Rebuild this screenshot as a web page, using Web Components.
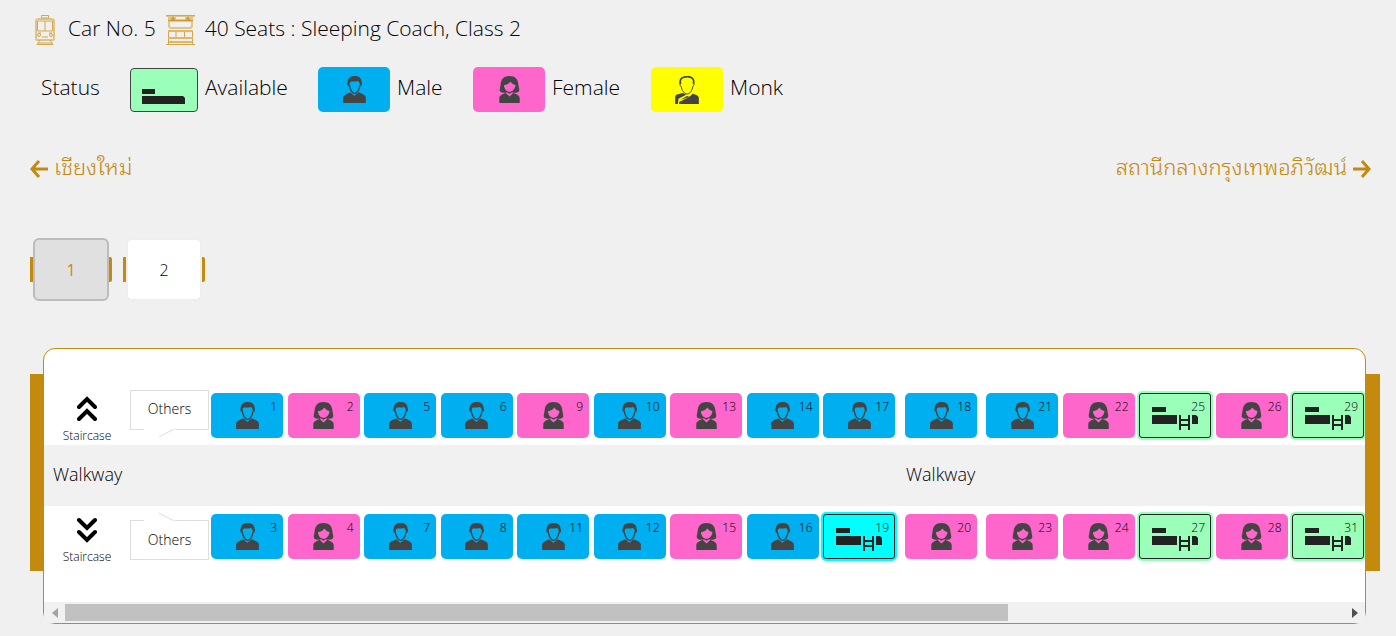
<!DOCTYPE html>
<html lang="en">
<head>
<meta charset="utf-8">
<title>Seat map</title>
<style>
  :root {
    --gold: #c48a0e;
    --ink: #000;
    --male: #00aff0;
    --female: #ff66cc;
    --monk: #ffff00;
    --free: #99ffb9;
    --picked: #00ffff;
  }
  body {
    margin: 0;
    background: #f0f0f0;
    color: var(--ink);
    font-family: "Open Sans", "Noto Sans Thai Looped", Laksaman, Loma, Garuda, "Noto Serif Thai", "Noto Sans Thai", sans-serif;
    font-weight: 350;
  }
</style>
</head>
<body>
<seat-page></seat-page>

<script>
const ICONS = {
  male: `<svg width="23" height="27" viewBox="0 0 69 82"><path fill="#444" d="M0 82V66C0 57 10 55 21 49L34 60L48 49C59 55 69 57 69 66V82Z"/><path fill="none" stroke="#444" stroke-width="4" d="M18 18C13 22 14 28 19 29C21 42 28 53 35 53S49 42 51 29C56 28 57 22 52 18"/><path fill="#444" d="M14 24C12 8 21 0 35 0S58 8 56 24L50 26C51 19 48 17 44 15C36 19 28 15 24 17C20 19 20 21 20 27Z"/></svg>`,
  female: `<svg width="21" height="27" viewBox="0 0 62 82"><path fill="#444" d="M0 82V68C0 59 8 57 19 51L31 62L43 51C54 57 62 59 62 68V82Z"/><path fill="#444" fill-rule="evenodd" d="M31 0C14 0 5 10 4 26C3 34 0 42 2 46C9 52 17 52 23 49L31 54L39 49C45 52 53 52 60 46C62 42 59 34 58 26C57 10 48 0 31 0ZM14 28C23 27 30 23 34 17C37 23 42 26 49 27C49 38 40 48 31 48S15 39 14 28Z"/></svg>`,
  monk: `<svg width="24" height="28" viewBox="0 0 71 84"><path fill="none" stroke="#444" stroke-width="3" d="M17 20C12 24 15 30 18 31C20 44 28 54 36 54S51 44 53 31C57 29 58 24 54 20"/><path fill="none" stroke="#444" stroke-width="5" d="M16 24C12 9 21 2 36 2S58 9 55 24"/><path fill="#444" d="M0 84V62C2 54 13 54 23 51L33 56L10 68L8 84ZM12 84V77C26 70 42 66 52 53C62 56 70 57 71 66V84ZM16 71L34 61L42 60L36 65Z"/></svg>`,
  bed: `<svg width="44" height="18" viewBox="0 0 44 18"><path fill="#222" d="M0 2H13V7H0ZM0 9H41L43 11V17H0Z"/></svg>`,
  bunk: `<svg width="46" height="24" viewBox="0 0 46 24"><path fill="#222" d="M0 0H14V5H0ZM0 8H25V17H0ZM40 8H44L46 10V17H40Z"/><path fill="none" stroke="#222" stroke-width="2" d="M28 8V23M37 8V23M28 13H37M28 18H37"/></svg>`,
  train: `<svg width="22" height="30" viewBox="0 0 22 30" fill="none" stroke="#d5a64a"><path stroke="#dfc48a" stroke-width="2" d="M2 24V6Q2 4 5 4H17Q20 4 20 6V24Q20 25 18 25H4Q2 25 2 24Z"/><path d="M7.500 .5H14.500V3H7.500Z"/><path d="M3.500 6H18.500V16H3.500ZM11 6V16M4 18H7M15 18H18M8 22H14"/><circle cx="5" cy="20" r="1.500"/><circle cx="17" cy="20" r="1.500"/><path d="M6 25L3 29.500H19L16 25M4 28H18"/></svg>`,
  coach: `<svg width="29" height="30" viewBox="0 0 29 30"><path fill="#e0c58b" d="M0 0H29V2H27V12L25 14H4L2 12V2H0Z"/><path fill="#f0f0f0" d="M10 2H19V4H10ZM4 7H25V11L24 12H5L4 11Z"/><path fill="#d39a2e" d="M4 6L7 1L10 6ZM19 6L22 1L25 6ZM2 5H27V6H2Z"/><g fill="none" stroke="#d5a64a"><path d="M0 .5H29M0 29.500H29M2.500 15V29M26.500 15V29M10 16V22M18.500 16V22"/><path stroke="#e0b766" stroke-width="2" d="M2 16H27M2 23H27M3 27H26"/></g></svg>`,
  left: `<svg width="18" height="18" viewBox="0 0 18 18" fill="none" stroke="#c48a0e" stroke-width="3"><path d="M9 1L2 9L9 17M2 9H18"/></svg>`,
  right: `<svg width="18" height="18" viewBox="0 0 18 18" fill="none" stroke="#c48a0e" stroke-width="3"><path d="M9 1L16 9L9 17M0 9H16"/></svg>`,
  up: `<svg width="20" height="26" viewBox="0 0 20 26" fill="none" stroke="#000" stroke-width="4" stroke-linecap="round"><path d="M2 11L10 3L18 11M2 23L10 15L18 23"/></svg>`,
  down: `<svg width="20" height="26" viewBox="0 0 20 26" fill="none" stroke="#000" stroke-width="4" stroke-linecap="round"><path d="M2 3L10 11L18 3M2 15L10 23L18 15"/></svg>`
};

class Base extends HTMLElement {
  constructor() { super(); this.attachShadow({ mode: 'open' }); }
  connectedCallback() {
    this.shadowRoot.innerHTML = `<style>*{box-sizing:border-box} svg{display:block;flex:none} ${this.css()}</style>${this.html()}`;
  }
  css() { return ''; }
  html() { return '<slot></slot>'; }
}

class UiIcon extends Base {
  css() { return ':host{display:block;flex:none}'; }
  html() { return ICONS[this.getAttribute('name')]; }
}

class CarTitle extends Base {
  css() { return `:host{display:flex;align-items:center;padding:0 4px;height:60px;font-size:21px;line-height:30px}
    h1{display:flex;align-items:center;gap:10px;margin:0;font:inherit}
    span{padding-bottom:4px}
    .car{padding-left:2px}`; }
  html() { return `<h1><ui-icon name="train"></ui-icon><span class="car">Car No. 5</span><ui-icon name="coach"></ui-icon><span>40 Seats : Sleeping Coach, Class 2</span></h1>`; }
}

class LegendItem extends Base {
  css() { return `:host{display:flex;align-items:center;gap:7px}
    .chip{width:72px;height:45px;border-radius:5px;display:flex;align-items:center;justify-content:center;flex:none}
    .male{background:var(--male)} .female{background:var(--female)} .monk{background:var(--monk)}
    .bed{width:68px;height:44px;background:var(--free);border:1px solid #444;border-radius:4px;padding-top:13px}
    .label{padding-bottom:5px}`; }
  html() { const k = this.getAttribute('kind'); return `<span class="chip ${k}">${ICONS[k]}</span><span class="label"><slot></slot></span>`; }
}

class StatusLegend extends Base {
  css() { return `:host{display:grid;grid-template-columns:89px 188px 155px 178px auto;align-items:center;padding:7px 11px;font-size:21px;line-height:30px}
    .label{padding-bottom:5px}`; }
  html() { return `<span class="label">Status</span><legend-item kind="bed">Available</legend-item><legend-item kind="male">Male</legend-item><legend-item kind="female">Female</legend-item><legend-item kind="monk">Monk</legend-item>`; }
}

class RouteEnds extends Base {
  css() { return `:host{display:flex;justify-content:space-between;align-items:center;height:38px;margin:31px 9px 0 0;color:var(--gold);font-size:22px;line-height:30px}
    div{display:flex;align-items:center;gap:6px}
    span{padding-bottom:7px}`; }
  html() { return `<div lang="th">${ICONS.left}<span>เชียงใหม่</span></div><div lang="th"><span>สถานีกลางกรุงเทพอภิวัฒน์</span>${ICONS.right}</div>`; }
}

class CarTab extends Base {
  css() { return `:host{display:flex;align-items:center}
    i{width:3px;height:25px;background:var(--gold)}
    i:first-child{border-radius:2px 0 0 2px} i:last-child{border-radius:0 2px 2px 0}
    button{width:76px;height:63px;border:2px solid #eee;border-radius:6px;background:#fff;color:#000;font:inherit;font-size:16px;padding:0;cursor:pointer}
    :host([active]) button{background:#e0e0e0;border-color:#bcbcbc;color:var(--gold);font-weight:400}`; }
  html() { return `<i></i><button type="button"><slot></slot></button><i></i>`; }
}

class CarTabs extends Base {
  css() { return `:host{display:flex;gap:11px;margin-top:50px}`; }
  html() { return `<car-tab active>1</car-tab><car-tab>2</car-tab>`; }
}

class SeatBox extends Base {
  css() { return `:host{display:block;flex:none}
    button{position:relative;display:flex;align-items:center;justify-content:center;width:72px;height:45px;border:0;border-radius:5px;padding:0;font:inherit;font-size:12px;line-height:16px;color:#000;cursor:pointer}
    .male{background:var(--male)} .female{background:var(--female)}
    .free,.picked{padding:7px 0 0;border:1px solid #222;border-radius:3px;background:var(--free);box-shadow:0 0 0 2px var(--free)}
    .picked{background:var(--picked);box-shadow:0 0 0 2px var(--picked)}
    .no{position:absolute;top:6px;right:6px}
    .free .no,.picked .no{top:5px;right:5px}`; }
  html() {
    const k = this.getAttribute('kind');
    const icon = ICONS[k] || ICONS.bunk;
    return `<button type="button" class="${k}">${icon}<span class="no"><slot></slot></span></button>`;
  }
}

class StairCase extends Base {
  css() { return `:host{display:flex;flex-direction:column;align-items:center;font-size:12px;line-height:16px;gap:6px;padding-top:6px}
    :host([dir=down]){padding-top:11px}`; }
  html() { return `${ICONS[this.getAttribute('dir')]}<span>Staircase</span>`; }
}

class OthersBox extends Base {
  css() { return `:host{display:block;position:relative;width:80px}
    div{display:flex;align-items:center;justify-content:center;width:79px;height:40px;border:1px solid #ddd;font-size:14px;line-height:20px;padding-bottom:2px}
    svg{position:absolute;left:14px;top:38px}
    :host([dir=down]) div{margin-top:14px;padding:0}
    :host([dir=down]) svg{top:6px;transform:scaleY(-1)}`; }
  html() { return `<div>Others</div><svg width="31" height="10" viewBox="0 0 31 10"><path fill="#fff" d="M0 0H31V2L15 10L0 2Z"/><path fill="none" stroke="#ddd" d="M15 9L30 1"/></svg>`; }
}

class SeatRow extends Base {
  css() { return `:host{display:flex;align-items:flex-start;height:var(--row)}
    stair-case{width:86px;flex:none} others-box{flex:none}
    .a,.b,.c{display:flex;justify-content:space-between;flex:none;padding-top:var(--drop)}
    .a{width:684px;margin-left:1px} .c{width:378px}
    .b{margin:0 9px 0 10px}`; }
  html() {
    const names = { m: 'male', f: 'female', a: 'free', p: 'picked' };
    const seats = this.getAttribute('seats').split(' ').map(s => `<seat-box kind="${names[s[0]]}">${s.slice(1)}</seat-box>`);
    const dir = this.getAttribute('dir');
    return `<stair-case dir="${dir}"></stair-case><others-box dir="${dir}"></others-box>
      <div class="a">${seats.slice(0, 9).join('')}</div><div class="b">${seats[9]}</div><div class="c">${seats.slice(10).join('')}</div>`;
  }
}

class WalkWay extends Base {
  css() { return `:host{display:grid;grid-template-columns:853px auto;align-items:center;height:61px;padding:0 0 4px 9px;box-sizing:border-box;background:#f1f1f1;font-size:18px;line-height:24px}`; }
  html() { return `<span>Walkway</span><span>Walkway</span>`; }
}

class ScrollBar extends Base {
  css() { return `:host{display:flex;align-items:center;height:21px;background:#f1f1f1}
    button{display:flex;align-items:center;justify-content:center;width:21px;height:21px;border:0;padding:0;background:none}
    .track{flex:1;height:17px} .thumb{width:73.7%;height:17px;background:#c1c1c1}`; }
  html() { return `<button type="button" aria-label="Scroll left"><svg width="6" height="10" viewBox="0 0 6 10"><path fill="#a3a3a3" d="M6 0V10L0 5Z"/></svg></button><div class="track"><div class="thumb"></div></div><button type="button" aria-label="Scroll right"><svg width="6" height="10" viewBox="0 0 6 10"><path fill="#505050" d="M0 0V10L6 5Z"/></svg></button>`; }
}

class CoachPlan extends Base {
  css() { return `:host{display:flex;align-items:flex-start;margin-top:47px}
    .end{flex:none;width:13px;height:197px;margin-top:26px;background:var(--gold)}
    .end:last-child{width:14px}
    .card{flex:1;min-width:0;border:1px solid var(--gold);border-radius:12px;background:#fff}
    .scroll{overflow:hidden;padding-top:41px}
    .top{--row:55px;--drop:3px}
    .bottom{--row:96px;--drop:8px}`; }
  html() { return `<div class="end"></div><div class="card"><div class="scroll">
    <seat-row class="top" dir="up" seats="m1 f2 m5 m6 f9 m10 f13 m14 m17 m18 m21 f22 a25 f26 a29"></seat-row>
    <walk-way></walk-way>
    <seat-row class="bottom" dir="down" seats="m3 f4 m7 m8 m11 m12 f15 m16 p19 f20 f23 f24 a27 f28 a31"></seat-row>
    </div><scroll-bar></scroll-bar></div><div class="end"></div>`; }
}

class SeatPage extends Base {
  css() { return `:host{display:block;padding:0 16px 12px 30px}`; }
  html() { return `<main><car-title></car-title><status-legend></status-legend><route-ends></route-ends><car-tabs></car-tabs><coach-plan></coach-plan></main>`; }
}

[['ui-icon', UiIcon], ['car-title', CarTitle], ['legend-item', LegendItem], ['status-legend', StatusLegend],
 ['route-ends', RouteEnds], ['car-tab', CarTab], ['car-tabs', CarTabs], ['seat-box', SeatBox],
 ['stair-case', StairCase], ['others-box', OthersBox], ['seat-row', SeatRow], ['walk-way', WalkWay],
 ['scroll-bar', ScrollBar], ['coach-plan', CoachPlan], ['seat-page', SeatPage]
].forEach(([n, c]) => customElements.define(n, c));
</script>
</body>
</html>
